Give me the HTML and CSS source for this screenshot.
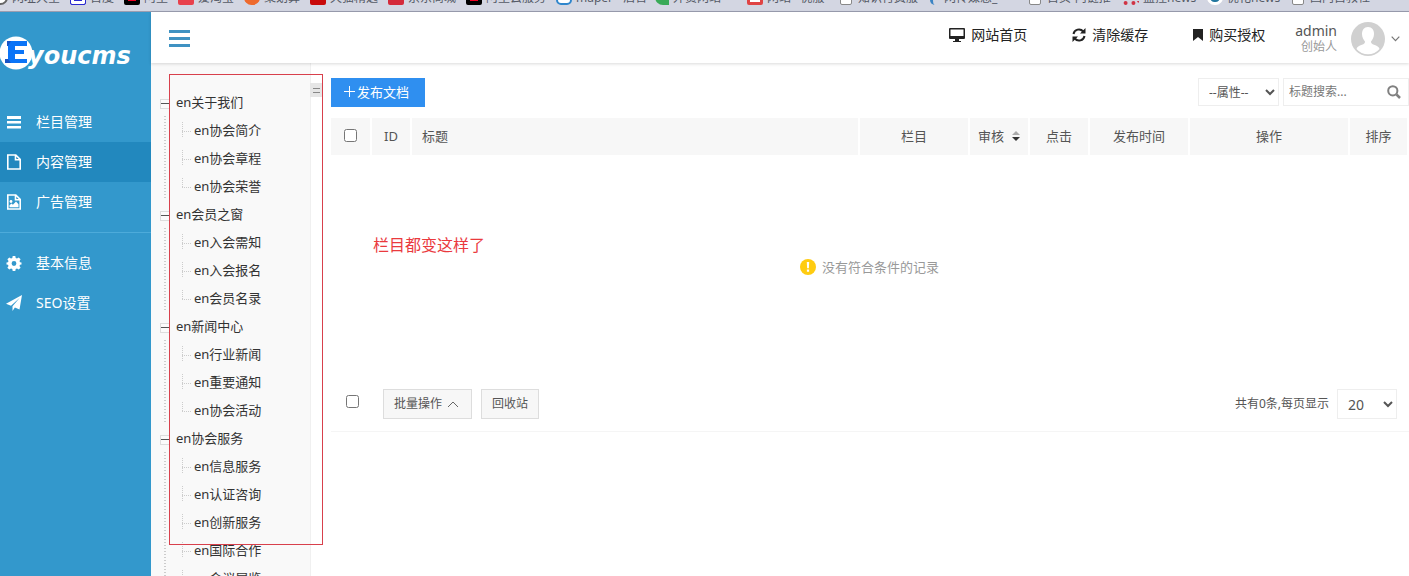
FILE: index.html
```html
<!DOCTYPE html>
<html lang="zh-CN">
<head>
<meta charset="utf-8">
<title>Eyoucms</title>
<link rel="stylesheet" href="styles.css">
</head>
<body>
<nav class="bookmarks" aria-label="书签">
  <a href="#"><i class="fav globe"></i>网址大全</a>
  <a href="#"><i class="fav baidu"></i>百度</a>
  <a href="#"><i class="fav black"></i>阿里</a>
  <a href="#"><i class="fav pink"></i>爱淘宝</a>
  <a href="#"><i class="fav orange"></i>聚划算</a>
  <a href="#"><i class="fav red"></i>天猫精选</a>
  <a href="#"><i class="fav jd"></i>京东商城</a>
  <a href="#"><i class="fav black"></i>阿里云服务</a>
  <a href="#"><i class="fav blue"></i>maper - 后台</a>
  <a href="#"><i class="fav green"></i>外贸网站</a>
  <a href="#"><i class="fav outline"></i>网站 · 优服</a>
  <a href="#"><i class="fav page-icon"></i>知识付费服</a>
  <a href="#"><i class="fav wave"></i>网传媒感_</a>
  <a href="#"><i class="fav page-icon"></i>首页-内链推</a>
  <a href="#"><i class="fav dots"></i>监控news</a>
  <a href="#"><i class="fav wp"></i>优化news</a>
  <a href="#"><i class="fav page-icon"></i>国内自救社</a>
</nav>
<div class="app">
  <aside class="sidebar">
    <a class="logo" href="#" aria-label="Eyoucms">
      <svg class="logo-mark" viewBox="0 0 34 34" width="34" height="34"><circle cx="16" cy="17" r="16.500" fill="#fff"/><path d="M7 5h20v5H15v4h9v4h-9v5h12v4H5v-4h3V10H7z" fill="#0a74f7"/><path d="M7 5h4l-3 5H7zM5 23h3l3 4H5z" fill="#1a55c4"/></svg>
      <span>youcms</span>
    </a>
    <nav class="menu">
      <a href="#"><svg viewBox="0 0 16 16"><path d="M1 2h14v3H1zM1 7h14v2.500H1zM1 12h14v2.500H1z"/></svg>栏目管理</a>
      <a href="#" class="active"><svg viewBox="0 0 16 16"><path d="M1.800 1h8l4.400 4.400V15H1.800zM9.500 1v4.800h4.700" class="line"/></svg>内容管理</a>
      <a href="#"><svg viewBox="0 0 16 16"><path d="M1.800 1h8l4.400 4.400V15H1.800zM9.500 1v4.800h4.700" class="line"/><circle cx="5" cy="7.500" r="1.400"/><path d="M3.500 13.300v-2L5.500 9.500l1.400 1.300L10 7.500l2.500 2.800v3z"/></svg>广告管理</a>
      <hr>
      <a href="#"><svg viewBox="0 0 16 16"><path fill-rule="evenodd" d="M6.700 1h2.600l.4 2 1.300.5 1.700-1.100 1.900 1.900L13.500 6l.5 1.300 1.500.3v1.800l-1.500.3-.5 1.300 1.100 1.700-1.900 1.900-1.700-1.100-1.300.5-.4 2H6.700l-.4-2-1.300-.5-1.700 1.100-1.900-1.900L2.500 11 2 9.700.5 9.400V7.600L2 7.300 2.500 6 1.400 4.300l1.900-1.900L5 3.500 6.300 3zM8 6.100a2.400 2.400 0 1 0 0 4.800 2.400 2.400 0 0 0 0-4.800z"/></svg>基本信息</a>
      <a href="#"><svg viewBox="0 0 16 16"><path d="M16 0l-2.500 14.500-4.600-2L6.500 16v-4.700L13.800 2.800 5 10.700 0 8.800z"/></svg>SEO设置</a>
    </nav>
  </aside>
  <div class="page">
    <header class="topbar">
      <button class="toggle" type="button" aria-label="菜单"><svg viewBox="0 0 21 17" width="21" height="17"><path d="M0 1.500h21M0 8.500h21M0 15.500h21" stroke="#3f92c2" stroke-width="3"/></svg></button>
      <nav class="links">
        <a href="#"><svg viewBox="0 0 16 14" width="16" height="14"><path fill-rule="evenodd" d="M1 0h14a1 1 0 0 1 1 1v9a1 1 0 0 1-1 1h-5v2h2v1H4v-1h2v-2H1a1 1 0 0 1-1-1V1a1 1 0 0 1 1-1zm.5 1.500v6.500h13V1.500z"/></svg>网站首页</a>
        <a href="#"><svg viewBox="0 0 14 14" width="14" height="14"><path d="M1.500 6a5.500 5.500 0 0 1 9.700-2.500M12.500 8a5.500 5.500 0 0 1-9.700 2.500" fill="none" stroke="#222" stroke-width="2"/><path d="M13.500 0v5.500H8zM.5 14V8.500H6z"/></svg>清除缓存</a>
        <a href="#"><svg viewBox="0 0 10 12" width="10" height="12"><path d="M0 0h10v12L5 8l-5 4z"/></svg>购买授权</a>
      </nav>
      <button class="user" type="button">
        <span class="who"><span>admin</span><small>创始人</small></span>
        <svg class="avatar" viewBox="0 0 34 34" width="34" height="34"><circle cx="17" cy="17" r="17" fill="#d0d0d0"/><path d="M17 5c4 0 6 3 6 7 0 3-1.500 6-3 7.500 0 2 1 2.500 3 3.200 3 1 5 2 5.500 4.300a15 15 0 0 1-23 0c.5-2.300 2.500-3.300 5.500-4.300 2-.7 3-1.200 3-3.200-1.500-1.500-3-4.500-3-7.500 0-4 2-7 6-7z" fill="#fff"/></svg>
        <svg viewBox="0 0 9 6" width="9" height="6"><path d="M.7.700l3.800 4 3.800-4" fill="none" stroke="#777" stroke-width="1.200"/></svg>
      </button>
    </header>
    <div class="body">
      <div class="tree-panel">
        <ul class="tree">
          <li><button type="button" aria-label="收起"></button><a href="#">en关于我们</a>
            <ul><li><a href="#">en协会简介</a></li><li><a href="#">en协会章程</a></li><li><a href="#">en协会荣誉</a></li></ul></li>
          <li><button type="button" aria-label="收起"></button><a href="#">en会员之窗</a>
            <ul><li><a href="#">en入会需知</a></li><li><a href="#">en入会报名</a></li><li><a href="#">en会员名录</a></li></ul></li>
          <li><button type="button" aria-label="收起"></button><a href="#">en新闻中心</a>
            <ul><li><a href="#">en行业新闻</a></li><li><a href="#">en重要通知</a></li><li><a href="#">en协会活动</a></li></ul></li>
          <li><button type="button" aria-label="收起"></button><a href="#">en协会服务</a>
            <ul><li><a href="#">en信息服务</a></li><li><a href="#">en认证咨询</a></li><li><a href="#">en创新服务</a></li><li><a href="#">en国际合作</a></li><li><a href="#">en会议展览</a></li></ul></li>
        </ul>
        <span class="handle"></span>
        <span class="mark-box"></span>
      </div>
      <main class="content">
        <div class="tools">
          <button class="primary" type="button"><svg viewBox="0 0 11 11" width="11" height="11"><path d="M5.500 0v11M0 5.500h11" stroke="#fff"/></svg>发布文档</button>
          <form class="filter">
            <select aria-label="属性"><option>--属性--</option></select>
            <div class="search">
              <input type="text" placeholder="标题搜索..." aria-label="标题搜索">
              <button type="button" aria-label="搜索"><svg viewBox="0 0 14 14" width="14" height="14"><path d="M9.500 9.500l3.500 3.500" stroke="#808080" stroke-width="2.500"/><circle cx="5.800" cy="5.800" r="4.600" fill="none" stroke="#808080" stroke-width="2"/></svg></button>
            </div>
          </form>
        </div>
        <table class="list">
          <colgroup><col class="c-check"><col class="c-id"><col><col class="c-cat"><col class="c-short"><col class="c-short"><col class="c-time"><col class="c-ops"><col class="c-sort"></colgroup>
          <thead><tr>
            <th><input type="checkbox" aria-label="全选"></th><th>ID</th><th class="left">标题</th><th>栏目</th>
            <th><span class="sortable">审核<svg viewBox="0 0 8 10" width="8" height="10"><path d="M4 0l4 4H0z" fill="#aaa"/><path d="M4 10l4-4H0z" fill="#333"/></svg></span></th>
            <th>点击</th><th>发布时间</th><th>操作</th><th>排序</th>
          </tr></thead>
          <tbody><tr><td colspan="9"><span class="empty"><svg viewBox="0 0 16 16" width="16" height="16"><circle cx="8" cy="8" r="8" fill="#fc1"/><path d="M6.800 3h2.400L8.900 9.300H7.100zM6.900 10.500h2.200v2.200H6.900z" fill="#fff"/></svg>没有符合条件的记录</span></td></tr></tbody>
        </table>
        <footer class="actions">
          <input type="checkbox" aria-label="全选">
          <button type="button">批量操作<svg viewBox="0 0 12 7" width="12" height="7"><path d="M1 6l5-5 5 5" fill="none" stroke="#666"/></svg></button>
          <button type="button">回收站</button>
          <label class="pager">共有0条,每页显示<select><option>20</option></select></label>
        </footer>
        <span class="mark-text">栏目都变这样了</span>
      </main>
    </div>
  </div>
</div>
</body>
</html>
```
FILE: styles.css
```css
* { box-sizing: border-box; }
body {
  margin: 0;
  height: 100vh;
  overflow: hidden;
  display: flex;
  flex-direction: column;
  font: 13px/20px "Noto Sans", "Noto Sans CJK SC", sans-serif;
  color: #555;
  background: #fff;
}
a { color: inherit; text-decoration: none; }
button, input, select { font: inherit; color: inherit; margin: 0; }
button { border: 0; padding: 0; background: none; }
ul { list-style: none; margin: 0; padding: 0; }

.bookmarks {
  flex: none;
  height: 12px;
  overflow: hidden;
  display: grid;
  grid-template-columns: 70px 54px 54px 66px 66px 78px 78px 90px 99px 92px 90px 93px 96px 97px 84px 82px 90px;
  align-content: end;
  padding-bottom: 5px;
  background: #d3d6e2;
  border-bottom: 1px solid #9a9db0;
  font-size: 12px;
  line-height: 16px;
  color: #555a66;
}
.bookmarks a { display: flex; gap: 4px; white-space: nowrap; }
.bookmarks a:first-child { margin-left: -8px; }
.fav { flex: none; width: 16px; height: 15px; border-radius: 2px; }
.globe { border: 2px solid #666; border-radius: 8px; background: #fff; }
.baidu { border: 1px solid #2a2ad0; background: #2a2ad0; box-shadow: inset 0 0 0 3px #fff; }
.black { background: #e02; border: 2px solid #000; border-width: 2px 4px 4px; }
.pink { background: #e8414c; }
.orange { background: #ee6a2d; border-radius: 8px; }
.red { background: #c80a0a; }
.jd { background: #d42a3a; }
.blue { border: 2px solid #2f86cc; border-radius: 5px; background: #fff; }
.green { width: 14px; background: #3aaa58; border-radius: 0 8px; }
.outline { border: 3px solid #e04444; background: #fff; }
.page-icon { width: 12px; margin: 0 2px 0 3px; border: 1px solid #888; background: #fff; }
.wave { width: 10px; border-left: 3px solid #3b84c4; border-radius: 8px; }
.dots { border-bottom: 4px dotted #d03344; }
.wp { border: 3px solid #fff; border-radius: 8px; background: #23779f; }

.app { flex: 1; min-height: 0; display: flex; }
.sidebar { flex: none; width: 151px; background: #3398cc; color: #fff; }
.logo { display: flex; align-items: center; height: 90px; padding-bottom: 8px; }
.logo-mark { flex: none; margin-right: -6px; }
.logo span { font: italic bold 24px/34px "DejaVu Sans", sans-serif; padding-top: 6px; }
.menu a {
  display: flex;
  align-items: center;
  gap: 14px;
  height: 40px;
  padding-left: 6px;
  font-size: 14px;
}
.menu a.active { background: #2288be; }
.menu svg { width: 16px; height: 16px; fill: #fff; }
.menu .line { fill: none; stroke: #fff; stroke-width: 1.600; }
.menu hr { margin: 10px 0; border: 0; border-top: 1px solid #4dabda; }

.page { flex: 1; min-width: 0; display: flex; flex-direction: column; }
.topbar {
  flex: none;
  height: 51px;
  display: flex;
  align-items: center;
  padding: 0 9px 0 18px;
  background: #fff;
  box-shadow: 0 1px 3px rgba(0, 0, 0, .15);
  position: relative;
  z-index: 1;
}
.toggle { display: flex; padding-top: 2px; }
.links { display: flex; gap: 45px; margin-left: auto; padding-bottom: 5px; font-size: 14px; color: #222; }
.links a { display: flex; align-items: center; gap: 6px; }
.links svg { fill: #222; }
.user { display: flex; align-items: center; margin-left: 30px; padding-top: 2px; gap: 6px; }
.who { display: flex; flex-direction: column; align-items: flex-end; margin-right: 8px; font-size: 14px; line-height: 16px; color: #555; }
.who small { font-size: 12px; color: #999; }

.body { flex: 1; min-height: 0; display: flex; }
.tree-panel {
  flex: none;
  position: relative;
  width: 160px;
  padding: 25px 0 0 9px;
  background: #f9f9f9;
  border-right: 1px solid #f0f0f0;
}
.tree { height: 100%; overflow: hidden; color: #333; }
.tree > li { display: grid; grid-template-columns: 10px 1fr; column-gap: 6px; align-items: center; }
.tree > li > a { line-height: 28px; }
.tree button {
  height: 10px;
  margin-top: 3px;
  border: 1px solid #ddd;
  background: linear-gradient(#555, #555) center / 8px 1px no-repeat #fbfbfb;
}
.tree ul {
  grid-column: 1 / -1;
  margin-left: 4px;
  padding-left: 18px;
  background: repeating-linear-gradient(#ccc 0 1px, transparent 1px 3px) 0 0 / 2px 100% no-repeat;
}
.tree ul li {
  height: 28px;
  padding-left: 12px;
  line-height: 28px;
  background:
    repeating-linear-gradient(#ccc 0 1px, transparent 1px 2px) 0 6px / 1px 16px no-repeat,
    repeating-linear-gradient(90deg, #ccc 0 1px, transparent 1px 2px) 0 15px / 9px 1px no-repeat;
}
.tree ul li:last-child {
  background:
    repeating-linear-gradient(#ccc 0 1px, transparent 1px 2px) 0 6px / 1px 10px no-repeat,
    repeating-linear-gradient(90deg, #ccc 0 1px, transparent 1px 2px) 0 15px / 9px 1px no-repeat;
}
.handle {
  position: absolute;
  top: 20px;
  right: -12px;
  width: 12px;
  height: 14px;
  background:
    linear-gradient(#888, #888) 3px 5px / 7px 1px no-repeat,
    linear-gradient(#888, #888) 3px 9px / 7px 1px no-repeat,
    #e6e6e6;
}
.mark-box {
  position: absolute;
  top: 11px;
  left: 18px;
  width: 154px;
  height: 471px;
  border: 1px solid #d8404c;
  z-index: 2;
  pointer-events: none;
}

.content { flex: 1; min-width: 0; position: relative; padding: 15px 0 0 20px; }
.tools { display: flex; justify-content: space-between; height: 40px; align-items: flex-start; }
.primary { display: flex; align-items: center; gap: 2px; height: 29px; padding: 0 16px 2px 13px; background: #2f8ff0; color: #fff; }
.filter { display: flex; gap: 4px; font-size: 12px; }
select { border: 1px solid #eee; background: #fff; }
.filter select { width: 81px; height: 28px; padding-left: 6px; }
.search { display: flex; width: 126px; height: 28px; border: 1px solid #eee; padding: 0 7px 0 5px; }
.search input { flex: 1; min-width: 0; padding: 0; border: 0; outline: 0; }
.search input::placeholder { color: #777; }
.search button { display: flex; align-items: center; }

.list { width: 100%; table-layout: fixed; border-collapse: collapse; }
.c-check { width: 40px; }
.c-id { width: 40px; }
.c-cat { width: 110px; }
.c-short { width: 60px; }
.c-time { width: 100px; }
.c-ops { width: 160px; }
.c-sort { width: 59px; }
.list th { height: 37px; padding: 0 0 2px; font-weight: 400; background: #f7f7f7; border-right: 2px solid #fff; }
.list th.left { text-align: left; padding-left: 10px; }
.list td { height: 225px; padding: 0; text-align: center; color: #999; }
input[type="checkbox"] { width: 13px; height: 13px; vertical-align: middle; }
.list input { margin-bottom: 4px; }
.sortable { display: inline-flex; align-items: center; gap: 8px; }
.empty { display: inline-flex; align-items: center; gap: 6px; padding-top: 2px; }

.actions {
  display: flex;
  align-items: center;
  padding: 9px 12px 12px 15px;
  border-bottom: 1px solid #f5f5f5;
  font-size: 12px;
}
.actions > input { margin: 0 24px 6px 0; }
.actions button {
  display: flex;
  align-items: center;
  gap: 5px;
  height: 30px;
  padding: 0 10px;
  margin-right: 9px;
  border: 1px solid #ddd;
  background: #f7f7f7;
}
.actions > button svg { margin-right: 2px; }
.pager { display: flex; align-items: center; gap: 8px; margin-left: auto; }
.pager select { width: 60px; height: 30px; padding-left: 6px; font-size: 14px; }
.mark-text { position: absolute; top: 172px; left: 62px; font-size: 16px; color: #ea3a3e; }
```
